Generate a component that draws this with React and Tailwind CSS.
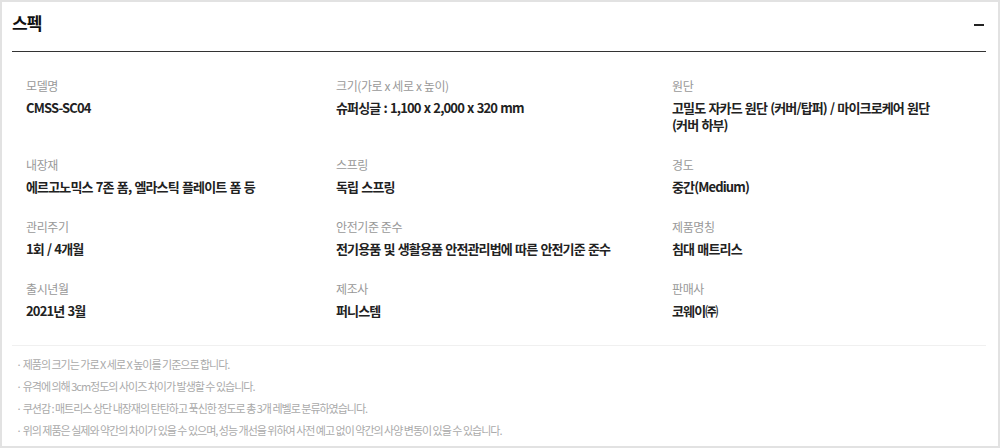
const SPECS = [
  [
    { label: '모델명', value: 'CMSS-SC04' },
    { label: '크기(가로 x 세로 x 높이)', value: '슈퍼싱글 : 1,100 x 2,000 x 320 mm' },
    { label: '원단', value: '고밀도 자카드 원단 (커버/탑퍼) / 마이크로케어 원단\n(커버 하부)' },
  ],
  [
    { label: '내장재', value: '에르고노믹스 7존 폼, 엘라스틱 플레이트 폼 등' },
    { label: '스프링', value: '독립 스프링' },
    { label: '경도', value: '중간(Medium)' },
  ],
  [
    { label: '관리주기', value: '1회 / 4개월' },
    { label: '안전기준 준수', value: '전기용품 및 생활용품 안전관리법에 따른 안전기준 준수' },
    { label: '제품명칭', value: '침대 매트리스' },
  ],
  [
    { label: '출시년월', value: '2021년 3월' },
    { label: '제조사', value: '퍼니스템' },
    { label: '판매사', value: '코웨이㈜' },
  ],
];

const NOTES = [
  '제품의 크기는 가로 X 세로 X 높이를 기준으로 합니다.',
  '유격에 의해 3cm정도의 사이즈 차이가 발생할 수 있습니다.',
  '쿠션감 : 매트리스 상단 내장재의 탄탄하고 푹신한 정도로 총 3개 레벨로 분류하였습니다.',
  '위의 제품은 실제와 약간의 차이가 있을 수 있으며, 성능 개선을 위하여 사전 예고 없이 약간의 사양 변동이 있을 수 있습니다.',
];

export default function App() {
  return (
    <div
      className="w-[1000px] h-[448px] bg-white border-2 border-[#e2e2e2] overflow-hidden"
      style={{ fontFamily: '"Noto Sans CJK KR", "Noto Sans", sans-serif' }}
    >
      <div className="pl-[10px] pr-[12px]">
        {/* header */}
        <div className="flex items-center justify-between h-[40px] pt-[1px]">
          <h2 className="text-[17px] font-bold text-[#111] tracking-[-1px]">스펙</h2>
          <span className="block w-[10px] h-[2px] bg-[#222] mr-[2px] mt-[4px]"></span>
        </div>
        <div className="h-px bg-[#333] mt-[9px]"></div>

        {/* spec grid */}
        <div className="pl-[14px] pt-[25px] h-[293px]">
          {SPECS.map((row, i) => (
            <div key={i} className="grid grid-cols-[310px_336px_1fr] mb-[23px]">
              {row.map((s) => (
                <div key={s.label}>
                  <div className="text-[12px] leading-[17px] text-[#999] tracking-[-0.4px]">{s.label}</div>
                  <div className="mt-[5px] text-[13px] leading-[17px] font-bold text-[#222] whitespace-pre-line tracking-[-0.85px] [word-spacing:1px]">
                    {s.value}
                  </div>
                </div>
              ))}
            </div>
          ))}
        </div>

        <div className="h-px bg-[#f0f0f0]"></div>

        {/* notes */}
        <ul className="pt-[10px] pl-[4px] space-y-[5px]">
          {NOTES.map((n) => (
            <li key={n} className="text-[11px] leading-[17px] text-[#aaa] tracking-[-1px]">
              · {n}
            </li>
          ))}
        </ul>
      </div>
    </div>
  );
}
